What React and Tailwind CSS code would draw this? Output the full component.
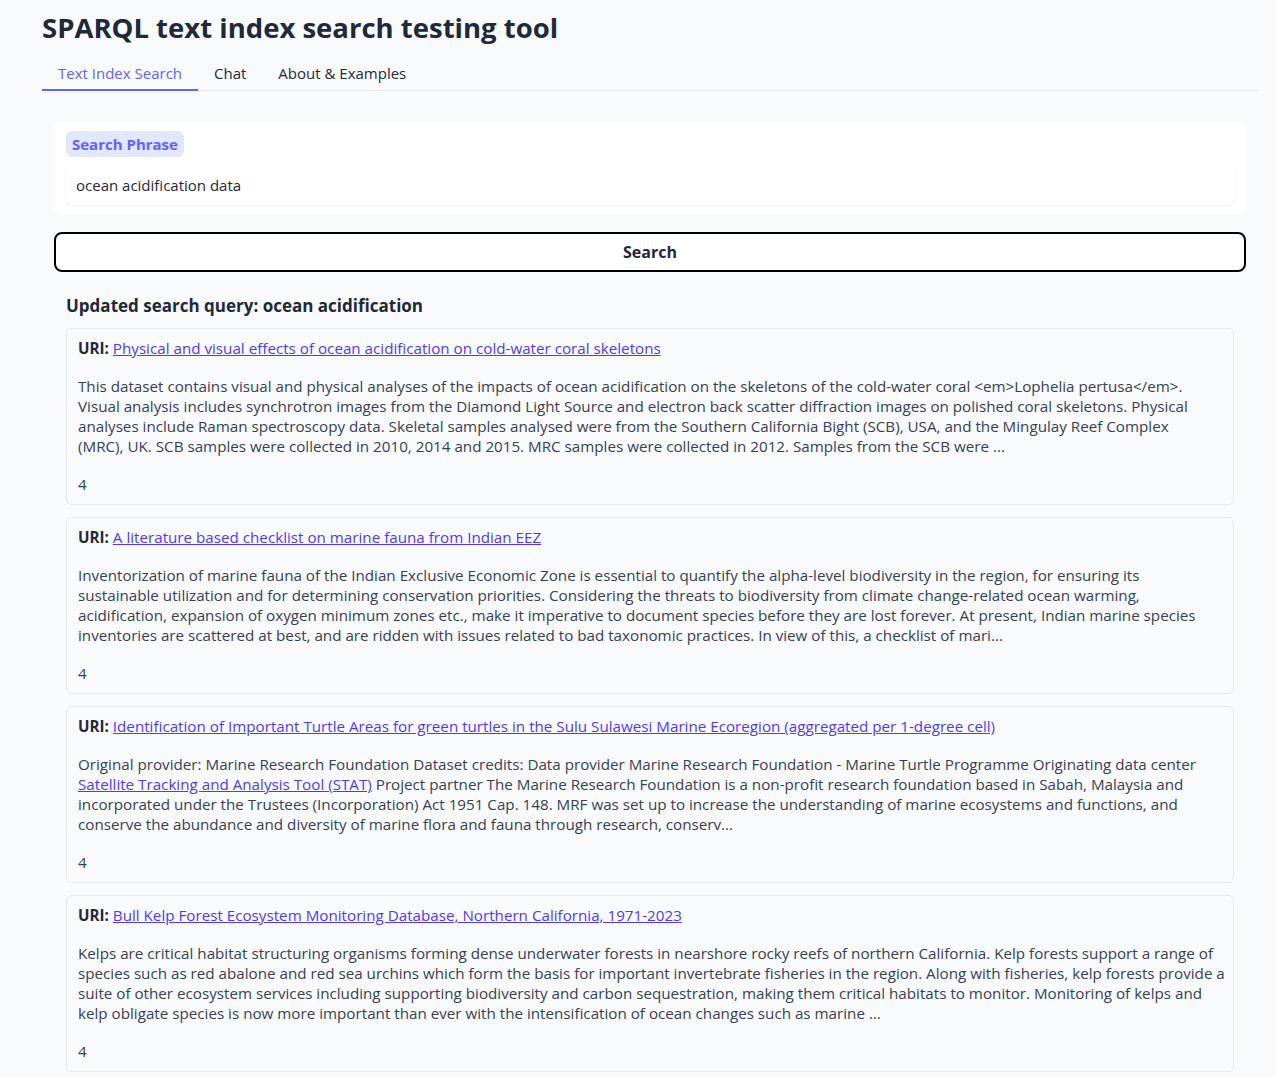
import { useState } from "react";

const results = [
  {
    title: "Physical and visual effects of ocean acidification on cold-water coral skeletons",
    lines: [
      "This dataset contains visual and physical analyses of the impacts of ocean acidification on the skeletons of the cold-water coral <em>Lophelia pertusa</em>.",
      "Visual analysis includes synchrotron images from the Diamond Light Source and electron back scatter diffraction images on polished coral skeletons. Physical",
      "analyses include Raman spectroscopy data. Skeletal samples analysed were from the Southern California Bight (SCB), USA, and the Mingulay Reef Complex",
      "(MRC), UK. SCB samples were collected in 2010, 2014 and 2015. MRC samples were collected in 2012. Samples from the SCB were ...",
    ],
    score: 4,
  },
  {
    title: "A literature based checklist on marine fauna from Indian EEZ",
    lines: [
      "Inventorization of marine fauna of the Indian Exclusive Economic Zone is essential to quantify the alpha-level biodiversity in the region, for ensuring its",
      "sustainable utilization and for determining conservation priorities. Considering the threats to biodiversity from climate change-related ocean warming,",
      "acidification, expansion of oxygen minimum zones etc., make it imperative to document species before they are lost forever. At present, Indian marine species",
      "inventories are scattered at best, and are ridden with issues related to bad taxonomic practices. In view of this, a checklist of mari...",
    ],
    score: 4,
  },
  {
    title: "Identification of Important Turtle Areas for green turtles in the Sulu Sulawesi Marine Ecoregion (aggregated per 1-degree cell)",
    lines: [
      "Original provider: Marine Research Foundation Dataset credits: Data provider Marine Research Foundation - Marine Turtle Programme Originating data center",
      <>
        <a href="#" className="text-indigo-600 underline">Satellite Tracking and Analysis Tool (STAT)</a> Project partner The Marine Research Foundation is a non-profit research foundation based in Sabah, Malaysia and
      </>,
      "incorporated under the Trustees (Incorporation) Act 1951 Cap. 148. MRF was set up to increase the understanding of marine ecosystems and functions, and",
      "conserve the abundance and diversity of marine flora and fauna through research, conserv...",
    ],
    score: 4,
  },
  {
    title: "Bull Kelp Forest Ecosystem Monitoring Database, Northern California, 1971-2023",
    lines: [
      "Kelps are critical habitat structuring organisms forming dense underwater forests in nearshore rocky reefs of northern California. Kelp forests support a range of",
      "species such as red abalone and red sea urchins which form the basis for important invertebrate fisheries in the region. Along with fisheries, kelp forests provide a",
      "suite of other ecosystem services including supporting biodiversity and carbon sequestration, making them critical habitats to monitor. Monitoring of kelps and",
      "kelp obligate species is now more important than ever with the intensification of ocean changes such as marine ...",
    ],
    score: 4,
  },
];

const tabs = ["Text Index Search", "Chat", "About & Examples"];

function ResultCard({ r }) {
  return (
    <div className="border border-gray-200 rounded-md bg-[#f9fafb] px-[11px] pt-[9px] pb-[10px] text-[15.2px] text-gray-700 leading-[20px]">
      <p>
        <span className="font-bold text-gray-800">URI:</span>{" "}
        <a href="#" className="text-indigo-600 underline">{r.title}</a>
      </p>
      <div className="mt-[18px]">
        {r.lines.map((l, i) => (
          <span key={i} className="block whitespace-nowrap">{l}</span>
        ))}
      </div>
      <p className="mt-[18px]">{r.score}</p>
    </div>
  );
}

export default function App() {
  const [active, setActive] = useState(0);
  const [query, setQuery] = useState("ocean acidification data");

  return (
    <div className="min-h-screen bg-[#f9fafb] pl-[42px] pr-[18px] pt-[10px] font-['Open_Sans',sans-serif]">
      <h1 className="text-[27.5px] leading-[36px] font-bold text-gray-800">SPARQL text index search testing tool</h1>

      <div className="flex mt-[9px] border-b border-gray-200">
        {tabs.map((t, i) => (
          <button
            key={t}
            onClick={() => setActive(i)}
            className={`px-4 h-[36px] pt-[2px] text-[15px] -mb-px border-b-2 ${
              active === i ? "text-indigo-500 border-indigo-500" : "text-gray-800 border-transparent"
            }`}
          >
            {t}
          </button>
        ))}
      </div>

      <div className="px-3 pt-[31px]">
        <div className="bg-white rounded-lg px-3 pt-[9px] pb-[10px]">
          <span className="inline-block bg-indigo-100 text-indigo-500 font-bold text-[15px] leading-[26px] px-[6px] rounded-md">
            Search Phrase
          </span>
          <input
            value={query}
            onChange={(e) => setQuery(e.target.value)}
            spellCheck={false}
            className="mt-[9px] block w-full h-[39px] px-[10px] pb-[2px] rounded-md bg-white shadow-[0_1px_3px_rgba(0,0,0,0.08)] text-[15px] text-gray-800 outline-none"
          />
        </div>

        <button className="mt-[17px] w-full h-[40px] bg-white border-2 border-black rounded-lg font-bold text-[16px] text-gray-800">
          Search
        </button>

        <div className="px-3">
          <h2 className="mt-[23px] text-[17px] leading-[22px] font-bold text-gray-800">
            Updated search query: ocean acidification
          </h2>
          <div className="mt-[11px] flex flex-col gap-3">
            {results.map((r, i) => (
              <ResultCard key={i} r={r} />
            ))}
          </div>
        </div>
      </div>
    </div>
  );
}
